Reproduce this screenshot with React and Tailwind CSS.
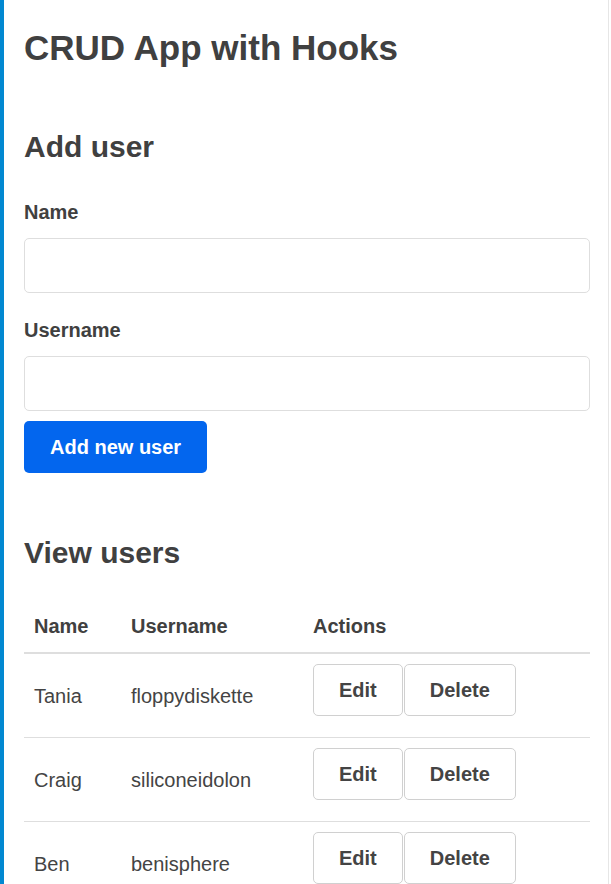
import React, { useState } from 'react';

const initialUsers = [
  { id: 1, name: 'Tania', username: 'floppydiskette' },
  { id: 2, name: 'Craig', username: 'siliconeidolon' },
  { id: 3, name: 'Ben', username: 'benisphere' },
];

const AddUserForm = ({ addUser }) => {
  const [user, setUser] = useState({ name: '', username: '' });

  const handleInputChange = (e) => {
    const { name, value } = e.target;
    setUser({ ...user, [name]: value });
  };

  return (
    <form
      onSubmit={(e) => {
        e.preventDefault();
        if (!user.name || !user.username) return;
        addUser(user);
        setUser({ name: '', username: '' });
      }}
    >
      <label className="block font-bold text-[20px] leading-[24px] text-[#404040]">Name</label>
      <input
        type="text"
        name="name"
        value={user.name}
        onChange={handleInputChange}
        className="block w-full h-[55px] mt-[14px] px-3 border border-[#dedede] rounded-[5px] text-[20px] outline-none"
      />
      <label className="block mt-[25px] font-bold text-[20px] leading-[24px] text-[#404040]">Username</label>
      <input
        type="text"
        name="username"
        value={user.username}
        onChange={handleInputChange}
        className="block w-full h-[55px] mt-[14px] px-3 border border-[#dedede] rounded-[5px] text-[20px] outline-none"
      />
      <button className="mt-[10px] px-[26px] py-[14px] bg-[#0366ee] text-white font-bold text-[20px] leading-[24px] rounded-[5px]">
        Add new user
      </button>
    </form>
  );
};

const UserTable = ({ users, deleteUser }) => (
  <table className="w-full mt-[29px] border-collapse text-[20px] leading-[24px]">
    <thead>
      <tr className="border-b-2 border-[#dedede]">
        <th className="w-[97px] px-[10px] pt-[14px] pb-[14px] text-left font-bold text-[#404040]">Name</th>
        <th className="w-[182px] px-[10px] pt-[14px] pb-[14px] text-left font-bold text-[#404040]">Username</th>
        <th className="px-[10px] pt-[14px] pb-[14px] text-left font-bold text-[#404040]">Actions</th>
      </tr>
    </thead>
    <tbody>
      {users.map((user) => (
        <tr key={user.id} className="border-b border-[#dedede]">
          <td className="px-[10px] py-[10px] align-middle text-[#444]">{user.name}</td>
          <td className="px-[10px] py-[10px] align-middle text-[#444]">{user.username}</td>
          <td className="px-[10px] py-[10px] align-middle">
            <div className="flex gap-[1px] mb-[11px]">
              <button className="px-[25px] py-[13px] bg-white border border-[#d0d0d0] rounded-[5px] font-bold text-[#444]">
                Edit
              </button>
              <button
                onClick={() => deleteUser(user.id)}
                className="px-[25px] py-[13px] bg-white border border-[#d0d0d0] rounded-[5px] font-bold text-[#444]"
              >
                Delete
              </button>
            </div>
          </td>
        </tr>
      ))}
    </tbody>
  </table>
);

export default function App() {
  const [users, setUsers] = useState(initialUsers);

  const addUser = (user) => {
    setUsers([...users, { ...user, id: users.length + 1 }]);
  };

  const deleteUser = (id) => setUsers(users.filter((u) => u.id !== id));

  return (
    <div className="flex min-h-[884px] bg-white font-['Liberation_Sans',Arial,sans-serif]">
      <div className="w-[4px] shrink-0 bg-[#0288d1]" />
      <div className="w-[605px] shrink-0 border-r border-[#e6e6e6] pl-[20px] pr-[18px] pt-[27px]">
        <h1 className="text-[35px] leading-[42px] font-bold text-[#404040]">CRUD App with Hooks</h1>
        <h2 className="mt-[60px] text-[30px] leading-[36px] font-bold text-[#404040]">Add user</h2>
        <div className="mt-[35px]">
          <AddUserForm addUser={addUser} />
        </div>
        <h2 className="mt-[62px] text-[30px] leading-[36px] font-bold text-[#404040]">View users</h2>
        <UserTable users={users} deleteUser={deleteUser} />
      </div>
    </div>
  );
}
